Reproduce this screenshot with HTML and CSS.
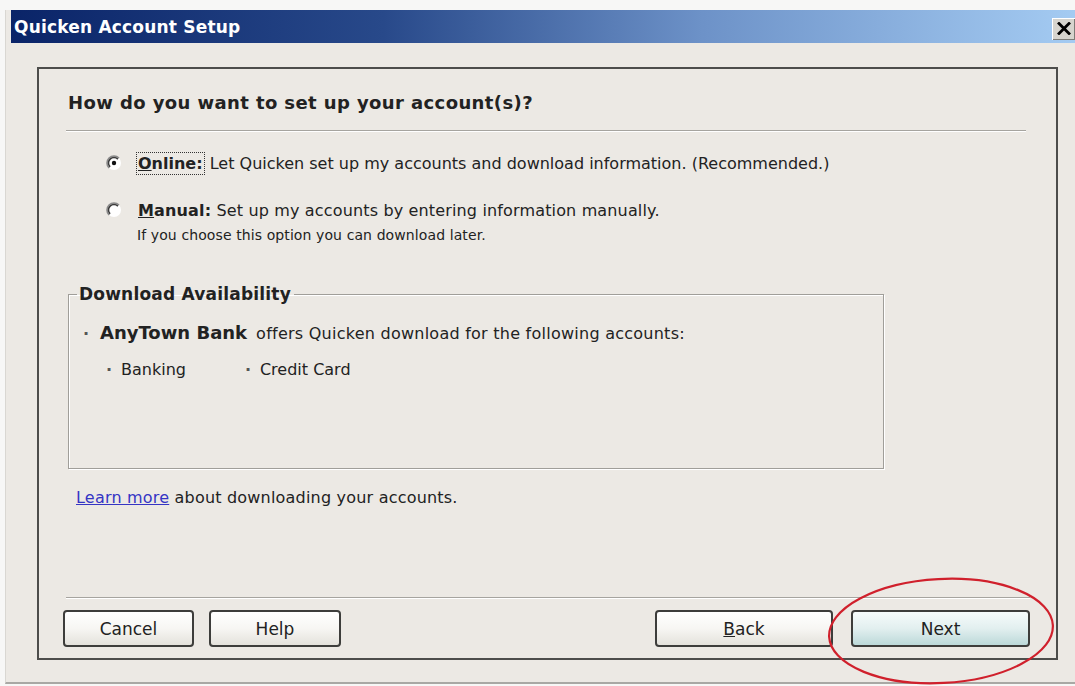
FILE: index.html
```html
<!DOCTYPE html>
<html lang="en">
<head>
<meta charset="utf-8">
<title>Quicken Account Setup</title>
<link rel="stylesheet" href="styles.css">
</head>
<body>
<div class="window">
  <div class="titlebar">
    <span class="title">Quicken Account Setup</span>
    <button class="close" aria-label="Close">
      <svg width="14" height="13" viewBox="0 0 14 13"><path d="M2 1.5 L12 11.5 M12 1.5 L2 11.5" stroke="#000" stroke-width="2.8" stroke-linecap="square"/></svg>
    </button>
  </div>

  <div class="panel">
    <h1 class="question">How do you want to set up your account(s)?</h1>
    <div class="rule"></div>

    <div class="option first">
      <svg class="radio" width="16" height="16" viewBox="0 0 16 16">
        <circle cx="8" cy="8" r="7" fill="#fff"/>
        <path d="M3.05 12.95 A7 7 0 0 1 12.95 3.05" fill="none" stroke="#8a8a8a" stroke-width="1.6"/>
        <path d="M4.1 11.9 A5.5 5.5 0 0 1 11.9 4.1" fill="none" stroke="#3a3a3a" stroke-width="1.5"/>
        <circle cx="8" cy="8" r="2.2" fill="#111"/>
      </svg>
      <span class="label"><span class="focus"><b><u>O</u>nline:</b></span> Let Quicken set up my accounts and download information. (Recommended.)</span>
    </div>

    <div class="option second">
      <svg class="radio" width="16" height="16" viewBox="0 0 16 16">
        <circle cx="8" cy="8" r="7" fill="#fff"/>
        <path d="M3.05 12.95 A7 7 0 0 1 12.95 3.05" fill="none" stroke="#8a8a8a" stroke-width="1.6"/>
        <path d="M4.1 11.9 A5.5 5.5 0 0 1 11.9 4.1" fill="none" stroke="#3a3a3a" stroke-width="1.5"/>
      </svg>
      <span class="label"><b><u>M</u>anual:</b> Set up my accounts by entering information manually.</span>
    </div>
    <p class="note">If you choose this option you can download later.</p>

    <fieldset class="avail">
      <legend>Download Availability</legend>
      <div class="avail-body">
        <div class="bank-line"><span class="dot">·</span><b>AnyTown Bank</b><span class="offers">offers Quicken download for the following accounts:</span></div>
        <div class="types">
          <span class="type"><span class="dot">·</span>Banking</span>
          <span class="type"><span class="dot">·</span>Credit Card</span>
        </div>
      </div>
    </fieldset>

    <p class="learn"><a href="#">Learn more</a> about downloading your accounts.</p>

    <div class="footer">
      <div class="rule"></div>
      <div class="buttons">
        <button class="btn cancel">Cancel</button>
        <button class="btn help">Help</button>
        <span class="spacer"></span>
        <button class="btn back"><u>B</u>ack</button>
        <span class="next-wrap">
          <button class="btn next">Next</button>
          <svg class="ring" width="228" height="108" viewBox="0 0 228 108"><ellipse cx="114" cy="54" rx="112" ry="52" fill="none" stroke="#d0202c" stroke-width="2.2" transform="rotate(-3 114 54)"/></svg>
        </span>
      </div>
    </div>
  </div>
</div>
</body>
</html>
```

FILE: styles.css
```css
* { box-sizing: border-box; }

html, body {
  margin: 0;
  padding: 0;
  background: #f7f7f6;
  width: 1075px;
  height: 686px;
  overflow: hidden;
  font-family: "DejaVu Sans", Verdana, sans-serif;
  color: #222;
}

.window {
  margin: 10px 0 0 5px;
  padding-left: 5px;
  width: 1070px;
  height: 674px;
  background: #ece9e4;
  border-left: 1px solid #d9d7d2;
  border-bottom: 2px solid #a9a8a4;
  display: flex;
  flex-direction: column;
}

.titlebar {
  height: 33px;
  flex: none;
  display: flex;
  align-items: center;
  justify-content: space-between;
  background: linear-gradient(to right, #0a2468 0%, #28498a 35%, #6d92c8 65%, #a4cbf2 100%);
}

.title {
  color: #fff;
  font-weight: bold;
  font-size: 17px;
  padding-left: 3px;
  letter-spacing: 0.2px;
}

.close {
  width: 23px;
  height: 22px;
  margin-top: 4px;
  padding: 0;
  border: none;
  background: #d6d4ce;
  box-shadow: inset 1px 1px 0 #fff, inset -1px -1px 0 #7d7c78;
  display: flex;
  align-items: center;
  justify-content: center;
}

.panel {
  margin: 24px 17px 0 26px;
  height: 593px;
  border: 2px solid #4d4d4b;
  padding: 0 28px 11px 27px;
  display: flex;
  flex-direction: column;
}

.question {
  margin: 24px 0 0 2px;
  font-size: 18px;
  line-height: 20px;
  font-weight: bold;
  letter-spacing: 0.4px;
}

.rule {
  height: 2px;
  border-top: 1px solid #a6a49f;
  border-bottom: 1px solid #fff;
  margin: 17px 2px 0 0;
}

.option {
  display: flex;
  align-items: center;
  height: 20px;
  padding-left: 40px;
  font-size: 16px;
}
.option.first { margin-top: 21px; }
.option.second { margin-top: 27px; }

.radio { flex: none; margin-right: 16px; }

.label { white-space: nowrap; }
.label b { font-weight: bold; }
.second .label { letter-spacing: 0.15px; }

.focus {
  outline: 1px dotted #333;
  outline-offset: 1px;
  margin-right: 2px;
}

.note {
  margin: 7px 0 0 71px;
  font-size: 14px;
  line-height: 16px;
  letter-spacing: 0.1px;
}

.avail {
  margin: 41px 0 0 2px;
  width: 816px;
  padding: 0;
  border: 1px solid #a09e99;
  box-shadow: inset 1px 1px 0 #fff, 1px 1px 0 #fff;
}

.avail legend {
  margin-left: 8px;
  padding: 0 3px 0 2px;
  font-size: 17px;
  line-height: 20px;
  font-weight: bold;
  letter-spacing: 0.2px;
}

.avail-body {
  height: 164px;
  padding: 19px 0 0 14px;
  font-size: 16px;
  line-height: 20px;
}

.dot { color: #555; display: inline-block; font-weight: bold; }

.bank-line .dot { width: 17px; }
.bank-line b { font-weight: bold; font-size: 18px; }
.offers { margin-left: 9px; letter-spacing: 0.25px; }

.types {
  display: flex;
  margin-top: 16px;
  padding-left: 23px;
}
.type .dot { width: 15px; }
.type + .type { margin-left: 59px; }

.learn {
  margin: 19px 0 0 10px;
  font-size: 16px;
  line-height: 20px;
  letter-spacing: 0.2px;
}
.learn a { color: #3535c4; }

.footer {
  margin-top: auto;
  margin-right: -2px;
}
.footer .rule { margin: 0 0 11px 0; }

.buttons {
  display: flex;
  align-items: center;
  margin-left: -3px;
}
.spacer { flex: 1; }

.btn {
  height: 37px;
  font-family: "DejaVu Sans", Verdana, sans-serif;
  font-size: 17px;
  color: #222;
  border: 2px solid #3d3d3b;
  border-radius: 4px;
  background: linear-gradient(#ffffff 0%, #f7f6f3 50%, #e4e2dc 100%);
  padding: 0;
}
.cancel { width: 131px; }
.help { width: 132px; margin-left: 15px; }
.back { width: 178px; }

.next-wrap {
  position: relative;
  margin-left: 18px;
  display: flex;
}
.next {
  width: 179px;
  background: linear-gradient(#f6fbfb 0%, #e2efef 50%, #bcd9d9 100%);
}

.ring {
  position: absolute;
  left: -24px;
  top: -33px;
  pointer-events: none;
}
```
